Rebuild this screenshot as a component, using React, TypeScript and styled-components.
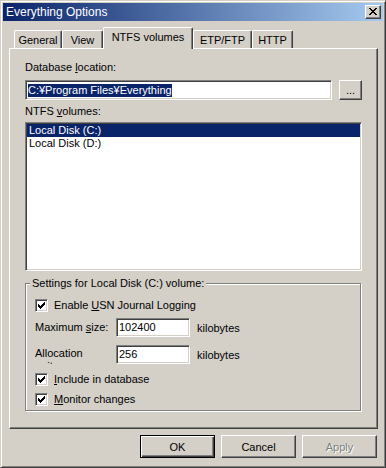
import styled, { createGlobalStyle } from "styled-components";

const GlobalStyle = createGlobalStyle`
  html, body {
    margin: 0;
    padding: 0;
    background: #d4d0c8;
  }
  body {
    font-family: "Liberation Sans", Arial, sans-serif;
    font-size: 11px;
    color: #000;
  }
`;

// pixel rows of the caption close glyph and the check mark
const closeRows = ["##....##", ".##..##.", "..####..", "...##...", "..####..", ".##..##.", "##....##"];
const closePath = closeRows
  .flatMap((row, y) => row.split("").map((c, x) => (c === "#" ? `M${x} ${y}h1v1h-1z` : "")))
  .join("");

const checkCols = [
  [0, 2], [1, 3], [2, 4], [3, 3], [4, 2], [5, 1], [6, 0],
];
const checkPath = checkCols.map(([x, y]) => `M${x} ${y}h1v3h-1z`).join("");

function CloseIcon() {
  return (
    <svg width="8" height="7" viewBox="0 0 8 7" shapeRendering="crispEdges">
      <path d={closePath} fill="#000" />
    </svg>
  );
}

function CheckMark() {
  return (
    <svg width="7" height="7" viewBox="0 0 7 7" shapeRendering="crispEdges">
      <path d={checkPath} fill="#000" />
    </svg>
  );
}

export default function App() {
  return (
    <>
      <GlobalStyle />
      <Window>
        <TitleBar>
          <Caption>Everything Options</Caption>
          <CaptionButton>
            <CloseIcon />
          </CaptionButton>
        </TitleBar>
        <Body>
          <TabStrip>
            <Tab $w={48}>General</Tab>
            <Tab $w={41}>View</Tab>
            <Tab $w={90} $active>
              NTFS volumes
            </Tab>
            <Tab $w={59}>ETP/FTP</Tab>
            <Tab $w={41}>HTTP</Tab>
          </TabStrip>
          <Panel>
            <Label>
              Database <u>l</u>ocation:
            </Label>
            <PathRow>
              <TextBox $w={307} $h={20}>
                <Selected>C:¥Program Files¥Everything</Selected>
              </TextBox>
              <Button $w={23} $h={20}>...</Button>
            </PathRow>
            <Label $top={5}>
              NTFS <u>v</u>olumes:
            </Label>
            <ListBox>
              <ListItem $selected>Local Disk (C:)</ListItem>
              <ListItem>Local Disk (D:)</ListItem>
            </ListBox>
            <GroupBox>
              <Legend>Settings for Local Disk (C:) volume:</Legend>
              <CheckRow $top={9}>
                <CheckBox>
                  <CheckMark />
                </CheckBox>
                <span>
                  Enable <u>U</u>SN Journal Logging
                </span>
              </CheckRow>
              <FieldRow $top={6}>
                <FieldLabel>
                  Maximum <u>s</u>ize:
                </FieldLabel>
                <TextBox $w={74} $h={19}>102400</TextBox>
                <Unit>kilobytes</Unit>
              </FieldRow>
              <FieldRow $top={8}>
                <FieldLabel $clip>Allocation unit:</FieldLabel>
                <TextBox $w={74} $h={19}>256</TextBox>
                <Unit>kilobytes</Unit>
              </FieldRow>
              <CheckRow $top={9}>
                <CheckBox>
                  <CheckMark />
                </CheckBox>
                <span>
                  <u>I</u>nclude in database
                </span>
              </CheckRow>
              <CheckRow $top={7}>
                <CheckBox>
                  <CheckMark />
                </CheckBox>
                <span>
                  <u>M</u>onitor changes
                </span>
              </CheckRow>
            </GroupBox>
          </Panel>
          <ButtonRow>
            <Button $w={75} $h={23} $default>OK</Button>
            <Button $w={75} $h={23}>Cancel</Button>
            <Button $w={75} $h={23} $disabled>Apply</Button>
          </ButtonRow>
        </Body>
      </Window>
    </>
  );
}

const Window = styled.div`
  width: 386px;
  height: 468px;
  box-sizing: border-box;
  border: 1px solid;
  border-color: #d4d0c8 #404040 #404040 #d4d0c8;
  box-shadow: inset 1px 1px 0 #fff, inset -1px -1px 0 #808080;
  padding: 2px;
  background: #d4d0c8;
  display: flex;
  flex-direction: column;
`;

const TitleBar = styled.div`
  height: 18px;
  flex-shrink: 0;
  display: flex;
  align-items: center;
  justify-content: space-between;
  padding: 0 2px 0 3px;
  background: linear-gradient(to right, #0a246a, #a6caf0);
  color: #fff;
`;

const Caption = styled.span`
  font-size: 12px;
  line-height: 14px;
`;

const CaptionButton = styled.div`
  width: 16px;
  height: 14px;
  box-sizing: border-box;
  border: 1px solid;
  border-color: #fff #404040 #404040 #fff;
  box-shadow: inset -1px -1px 0 #808080;
  background: #d4d0c8;
  display: flex;
  align-items: center;
  justify-content: center;
  padding: 0 1px 1px 0;
`;

const Body = styled.div`
  flex: 1;
  display: flex;
  flex-direction: column;
  padding: 6px 5px 7px 6px;
`;

const TabStrip = styled.div`
  height: 21px;
  display: flex;
  align-items: flex-end;
  padding-left: 5px;
`;

const Tab = styled.div<{ $w: number; $active?: boolean }>`
  position: relative;
  z-index: ${(p) => (p.$active ? 1 : 0)};
  width: ${(p) => p.$w}px;
  height: ${(p) => (p.$active ? 22 : 18)}px;
  margin-bottom: ${(p) => (p.$active ? -1 : 0)}px;
  box-sizing: border-box;
  border: 1px solid;
  border-bottom: none;
  border-color: #fff #404040 #404040 #fff;
  border-radius: 2px 2px 0 0;
  box-shadow: inset -1px 0 0 #808080;
  background: #d4d0c8;
  padding-top: 3px;
  line-height: 13px;
  text-align: center;
  white-space: nowrap;
`;

const Panel = styled.div`
  height: 381px;
  box-sizing: border-box;
  border: 1px solid;
  border-color: #fff #404040 #404040 #fff;
  box-shadow: inset -1px -1px 0 #808080;
  padding: 12px 15px 0 15px;
  display: flex;
  flex-direction: column;
`;

const Label = styled.div<{ $top?: number }>`
  height: 13px;
  line-height: 13px;
  margin-top: ${(p) => p.$top ?? 0}px;
`;

const PathRow = styled.div`
  display: flex;
  gap: 7px;
  margin-top: 6px;
`;

const TextBox = styled.div<{ $w: number; $h: number }>`
  width: ${(p) => p.$w}px;
  height: ${(p) => p.$h}px;
  box-sizing: border-box;
  border: 1px solid;
  border-color: #808080 #fff #fff #808080;
  box-shadow: inset 1px 1px 0 #404040, inset -1px -1px 0 #d4d0c8;
  background: #fff;
  padding-left: 2px;
  display: flex;
  align-items: center;
  line-height: 13px;
  white-space: nowrap;
  overflow: hidden;
`;

const Selected = styled.span`
  background: #0a246a;
  color: #fff;
`;

const Button = styled.div<{ $w: number; $h: number; $default?: boolean; $disabled?: boolean }>`
  width: ${(p) => p.$w}px;
  height: ${(p) => p.$h}px;
  box-sizing: border-box;
  border: 1px solid;
  border-color: ${(p) => (p.$default ? "#000" : "#fff #404040 #404040 #fff")};
  box-shadow: ${(p) =>
    p.$default
      ? "inset 1px 1px 0 #fff, inset -1px -1px 0 #404040, inset -2px -2px 0 #808080"
      : "inset -1px -1px 0 #808080"};
  background: #d4d0c8;
  display: flex;
  align-items: center;
  justify-content: center;
  color: ${(p) => (p.$disabled ? "#808080" : "#000")};
  text-shadow: ${(p) => (p.$disabled ? "1px 1px 0 #fff" : "none")};
`;

const ListBox = styled.div`
  width: 337px;
  height: 149px;
  box-sizing: border-box;
  margin-top: 4px;
  border: 1px solid;
  border-color: #808080 #fff #fff #808080;
  box-shadow: inset 1px 1px 0 #404040, inset -1px -1px 0 #d4d0c8;
  background: #fff;
  padding: 1px;
`;

const ListItem = styled.div<{ $selected?: boolean }>`
  height: 13px;
  line-height: 13px;
  padding-left: 2px;
  background: ${(p) => (p.$selected ? "#0a246a" : "transparent")};
  color: ${(p) => (p.$selected ? "#fff" : "#000")};
`;

const GroupBox = styled.div`
  width: 336px;
  box-sizing: border-box;
  margin-top: 12px;
  border: 1px solid #808080;
  box-shadow: 1px 1px 0 #fff, inset 1px 1px 0 #fff;
  padding: 0 0 4px 9px;
  display: flex;
  flex-direction: column;
`;

const Legend = styled.div`
  align-self: flex-start;
  margin: -7px 0 0 -5px;
  padding: 0 2px;
  height: 13px;
  line-height: 13px;
  background: #d4d0c8;
`;

const CheckRow = styled.div<{ $top: number }>`
  display: flex;
  align-items: center;
  gap: 6px;
  height: 13px;
  line-height: 13px;
  margin-top: ${(p) => p.$top}px;
`;

const CheckBox = styled.div`
  width: 13px;
  height: 13px;
  box-sizing: border-box;
  border: 1px solid;
  border-color: #808080 #fff #fff #808080;
  box-shadow: inset 1px 1px 0 #404040, inset -1px -1px 0 #d4d0c8;
  background: #fff;
  display: flex;
  align-items: center;
  justify-content: center;
`;

const FieldRow = styled.div<{ $top: number }>`
  display: flex;
  align-items: center;
  height: 19px;
  margin-top: ${(p) => p.$top}px;
`;

const FieldLabel = styled.div<{ $clip?: boolean }>`
  width: 81px;
  box-sizing: border-box;
  padding-right: ${(p) => (p.$clip ? 20 : 0)}px;
  line-height: 13px;
  height: ${(p) => (p.$clip ? "19px" : "auto")};
  padding-top: ${(p) => (p.$clip ? 2 : 0)}px;
  overflow: hidden;
`;

const Unit = styled.span`
  margin-left: 7px;
`;

const ButtonRow = styled.div`
  display: flex;
  justify-content: flex-end;
  gap: 6px;
  margin-top: 6px;
  padding-right: 1px;
`;
